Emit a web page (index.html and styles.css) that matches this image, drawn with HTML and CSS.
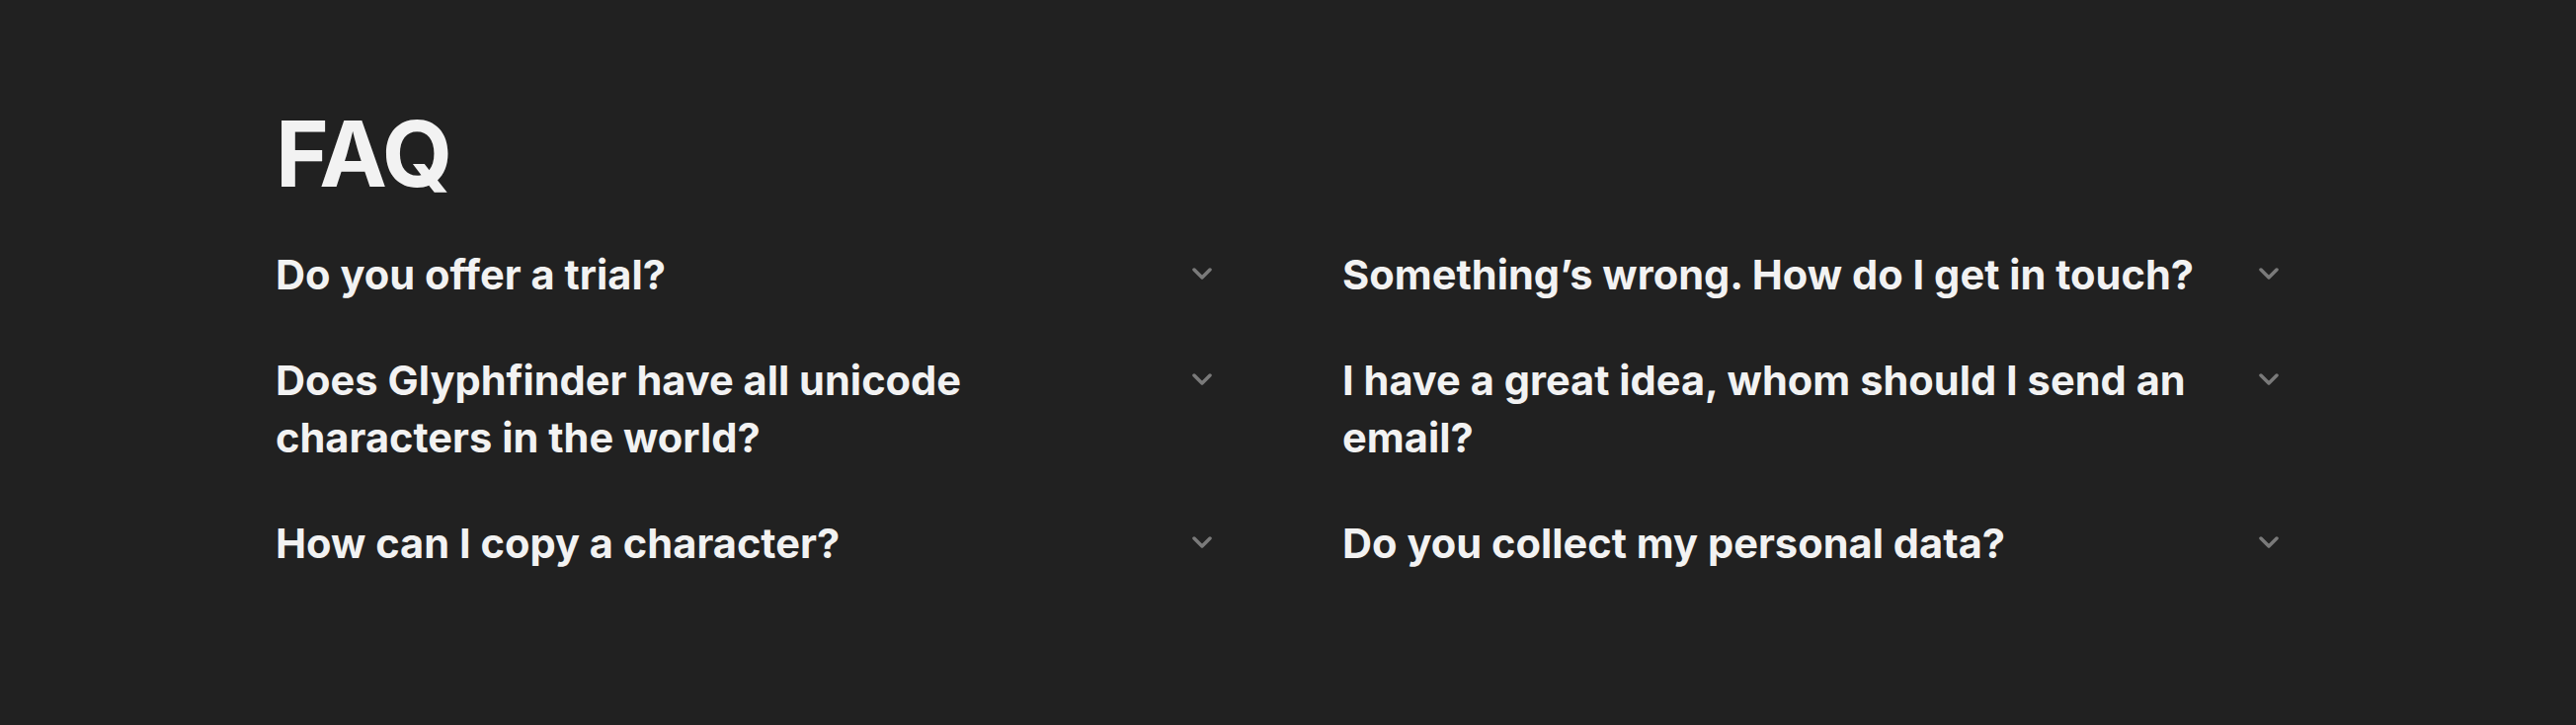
FILE: index.html
```html
<!DOCTYPE html>
<html lang="en">
<head>
<meta charset="utf-8">
<title>FAQ</title>
<link rel="stylesheet" href="styles.css">
</head>
<body>
<section class="faq">
  <h2 class="faq-title">FAQ</h2>
  <div class="faq-grid">
    <div class="faq-item">
      <h3 class="faq-q">Do you offer a trial?</h3>
      <svg class="faq-chevron" viewBox="0 0 20 12" aria-hidden="true"><polyline points="2,2 10,10 18,2"/></svg>
    </div>
    <div class="faq-item">
      <h3 class="faq-q">Something’s wrong. How do I get in touch?</h3>
      <svg class="faq-chevron" viewBox="0 0 20 12" aria-hidden="true"><polyline points="2,2 10,10 18,2"/></svg>
    </div>
    <div class="faq-item">
      <h3 class="faq-q">Does Glyphfinder have all unicode characters in the world?</h3>
      <svg class="faq-chevron" viewBox="0 0 20 12" aria-hidden="true"><polyline points="2,2 10,10 18,2"/></svg>
    </div>
    <div class="faq-item">
      <h3 class="faq-q">I have a great idea, whom should I send an email?</h3>
      <svg class="faq-chevron" viewBox="0 0 20 12" aria-hidden="true"><polyline points="2,2 10,10 18,2"/></svg>
    </div>
    <div class="faq-item">
      <h3 class="faq-q">How can I copy a character?</h3>
      <svg class="faq-chevron" viewBox="0 0 20 12" aria-hidden="true"><polyline points="2,2 10,10 18,2"/></svg>
    </div>
    <div class="faq-item">
      <h3 class="faq-q">Do you collect my personal data?</h3>
      <svg class="faq-chevron" viewBox="0 0 20 12" aria-hidden="true"><polyline points="2,2 10,10 18,2"/></svg>
    </div>
  </div>
</section>
</body>
</html>
```
FILE: styles.css
```css
html, body {
  margin: 0;
  padding: 0;
  background: #212121;
  color: #f2f2f2;
  font-family: Inter, "Noto Sans", sans-serif;
  height: 100%;
}

.faq {
  width: 2050px;
  margin: 0 auto;
  padding-top: 110px;
}

.faq-title {
  margin: 0;
  font-size: 92px;
  line-height: 92px;
  font-weight: 700;
  letter-spacing: -0.015em;
}

.faq-grid {
  display: grid;
  grid-template-columns: 972px 972px;
  column-gap: 108px;
  row-gap: 49px;
  margin-top: 47px;
}

.faq-item {
  display: flex;
  align-items: flex-start;
  gap: 58px;
  padding-right: 24px;
}

.faq-q {
  flex: 1;
  margin: 0;
  font-size: 41.6px;
  line-height: 58px;
  font-weight: 700;
}

.faq-chevron {
  flex: none;
  width: 20px;
  height: 12px;
  margin-top: 22px;
  fill: none;
  stroke: #7a7a7a;
  stroke-width: 3.5;
  stroke-linecap: round;
  stroke-linejoin: round;
}
```
